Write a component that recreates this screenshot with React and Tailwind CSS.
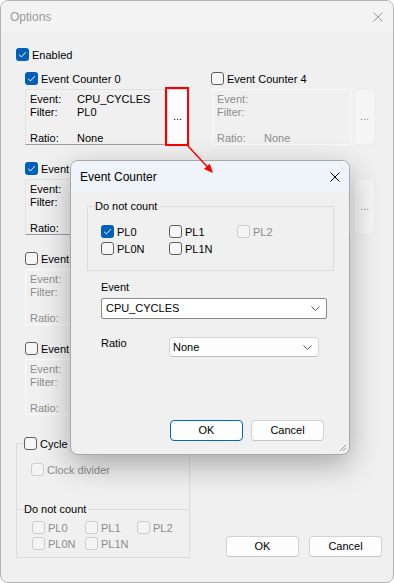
import clsx from 'clsx';

const SANS = "font-['Liberation_Sans',Arial,sans-serif]";

function Box({ on, dis }) {
  if (on) {
    return (
      <span className="flex h-[13px] w-[13px] shrink-0 items-center justify-center rounded-[3px] bg-[#005fb8]">
        <svg width="13" height="13" viewBox="0 0 13 13">
          <path d="M3.2 6.8 L5.4 8.9 L9.9 4.2" fill="none" stroke="#fff" strokeWidth="1" />
        </svg>
      </span>
    );
  }
  return (
    <span
      className={clsx(
        'block h-[13px] w-[13px] shrink-0 rounded-[3px] border',
        dis ? 'border-[#cdcdcd] bg-[#f4f4f4]' : 'border-[#5f5f5f] bg-[#f6f6f6]'
      )}
    />
  );
}

function Check({ on, dis, children, className }) {
  return (
    <div className={clsx('flex h-[13px] items-center gap-[3px] leading-[13px]', className)}>
      <Box on={on} dis={dis} />
      <span className={clsx('pt-[1px]', dis ? 'text-[#8d8d8d]' : 'text-black')}>{children}</span>
    </div>
  );
}

function XIcon({ color = '#000', size = 10 }) {
  return (
    <svg width={size} height={size} viewBox="0 0 10 10">
      <path d="M0.5 0.5 L9.5 9.5 M9.5 0.5 L0.5 9.5" stroke={color} strokeWidth="1" />
    </svg>
  );
}

function Chevron() {
  return (
    <svg width="9" height="5" viewBox="0 0 9 5">
      <path d="M0.5 0.5 L4.5 4.5 L8.5 0.5" fill="none" stroke="#5a5a5a" strokeWidth="1" />
    </svg>
  );
}

function Counter({ n, on, right, event = '', filter = '', ratio = '' }) {
  const label = on ? 'text-black' : 'text-[#8d8d8d]';
  return (
    <div className="flex w-[164px] flex-col">
      <Check on={on}>Event Counter {n}</Check>
      <div className={clsx('mt-[4px] flex', right ? 'ml-[1px] gap-[3px]' : 'gap-[2px]')}>
        <div
          className={clsx(
            'grid h-[56px] w-[140px] grid-cols-[47px_1fr] border pl-[4px] pt-[3px] leading-[13px]',
            label,
            on ? 'border-[#e2e2e2] border-b-[#9c9c9c]' : 'border-[#fafafa]'
          )}
        >
          <span>Event:</span>
          <span>{event}</span>
          <span>Filter:</span>
          <span>{filter}</span>
          <span className="col-span-2 h-[13px]" />
          <span>Ratio:</span>
          <span>{ratio}</span>
        </div>
        <div
          className={clsx(
            'flex h-[56px] w-[21px] items-center justify-center rounded-[4px] border pb-[2px]',
            on ? 'border-[#dcdcdc] bg-[#fdfdfd] text-black' : 'border-[#ececec] bg-[#f5f5f5] text-[#8d8d8d]'
          )}
        >
          ...
        </div>
      </div>
    </div>
  );
}

function Button({ children, primary, className }) {
  return (
    <div
      className={clsx(
        'flex h-[21px] w-[73px] items-center justify-center rounded-[4px] border bg-[#fdfdfd]',
        primary ? 'border-[#0067c0]' : 'border-[#d3d3d3] border-b-[#c4c4c4]',
        className
      )}
    >
      {children}
    </div>
  );
}

export default function App() {
  return (
    <div className={clsx('relative h-[583px] w-[394px] overflow-hidden bg-white text-[11px] text-black', SANS)}>
      {/* Options window */}
      <div className="flex h-full w-full flex-col overflow-hidden rounded-[8px] border border-[#b4b4b4] bg-[#f0f0f0]">
        <div className="flex h-[31px] shrink-0 items-center justify-between bg-[#f3f3f3] pl-[9px] pr-[10px]">
          <span className="text-[12px] text-[#9a9a9a]">Options</span>
          <XIcon color="#9a9a9a" size={10} />
        </div>

        <div className="flex flex-1 flex-col pl-[15px] pt-[16px]">
          <Check on>Enabled</Check>

          <div className="ml-[9px] mt-[11px] flex gap-[22px]">
            <div className="flex flex-col gap-[17px]">
              <Counter n={0} on event="CPU_CYCLES" filter="PL0" ratio="None" />
              <Counter n={1} on />
              <Counter n={2} />
              <Counter n={3} />
            </div>
            <div className="flex flex-col gap-[17px]">
              <Counter n={4} right ratio="None" />
              <Counter n={5} right ratio="None" />
            </div>
          </div>

          <div className="mt-[22px] flex items-end pr-[11px]">
            <fieldset className="w-[173px] border border-[#dcdcdc] pb-[7px]">
              <legend className="ml-[7px] pr-[2px]">
                <Check>Cycle counter</Check>
              </legend>
              <Check dis className="ml-[14px] mt-[13px]">Clock divider</Check>
              <fieldset className="mt-[27px] border-0 border-t border-[#dcdcdc]">
                <legend className="ml-[7px] pr-[2px] leading-[13px]">Do not count</legend>
                <div className="ml-[15px] mt-[5px] grid grid-cols-[53px_52px_52px] gap-y-[3px]">
                  <Check dis>PL0</Check>
                  <Check dis>PL1</Check>
                  <Check dis>PL2</Check>
                  <Check dis>PL0N</Check>
                  <Check dis>PL1N</Check>
                </div>
              </fieldset>
            </fieldset>
            <div className="ml-auto flex gap-[10px] pb-[1px]">
              <Button>OK</Button>
              <Button>Cancel</Button>
            </div>
          </div>
        </div>
      </div>

      {/* Event Counter dialog */}
      <div className="absolute left-[70px] top-[160px] flex h-[295px] w-[280px] flex-col rounded-[8px] border border-[#a8a8a8] bg-[#f0f0f0] shadow-[0_10px_30px_rgba(0,0,0,0.3)]">
        <div className="flex h-[31px] shrink-0 items-center justify-between rounded-t-[7px] bg-[#eef4f9] pl-[9px] pr-[9px]">
          <span className="text-[12px]">Event Counter</span>
          <XIcon />
        </div>

        <fieldset className="ml-[16px] mt-[8px] w-[247px] border border-[#dcdcdc] pb-[15px]">
          <legend className="ml-[7px] pr-[2px] leading-[13px]">Do not count</legend>
          <div className="ml-[13px] mt-[12px] grid grid-cols-[68px_68px_68px] gap-y-[4px]">
            <Check on>PL0</Check>
            <Check>PL1</Check>
            <Check dis>PL2</Check>
            <Check>PL0N</Check>
            <Check>PL1N</Check>
          </div>
        </fieldset>

        <div className="ml-[30px] mt-[10px] leading-[13px]">Event</div>
        <div className="ml-[30px] mt-[4px] flex h-[21px] w-[226px] items-center justify-between rounded-[2px] border border-[#8a8a8a] bg-white pl-[4px] pr-[6px]">
          <span>CPU_CYCLES</span>
          <Chevron />
        </div>

        <div className="ml-[30px] mt-[18px] flex">
          <span className="w-[68px] leading-[13px]">Ratio</span>
          <div className="flex h-[20px] w-[150px] items-center justify-between rounded-[4px] border border-[#d3d3d3] border-b-[#bdbdbd] bg-[#fdfdfd] pl-[3px] pr-[6px]">
            <span>None</span>
            <Chevron />
          </div>
        </div>

        <div className="ml-[99px] mt-[63px] flex gap-[8px]">
          <Button primary>OK</Button>
          <Button>Cancel</Button>
        </div>

        <svg className="absolute bottom-[2px] right-[2px]" width="9" height="9" viewBox="0 0 9 9">
          <path d="M8 2 L2 8 M8 5 L5 8" stroke="#9a9a9a" strokeWidth="1" />
        </svg>
      </div>

      {/* annotation */}
      <div className="absolute left-[165px] top-[87px] h-[59px] w-[24px] border-2 border-[#ff0000]" />
      <svg className="absolute left-0 top-0" width="394" height="583" viewBox="0 0 394 583">
        <line x1="188" y1="146" x2="207" y2="166.5" stroke="#ff0000" strokeWidth="1.5" />
        <polygon points="213,173 203.9,169.1 209.8,163.7" fill="#ff0000" />
      </svg>
    </div>
  );
}
